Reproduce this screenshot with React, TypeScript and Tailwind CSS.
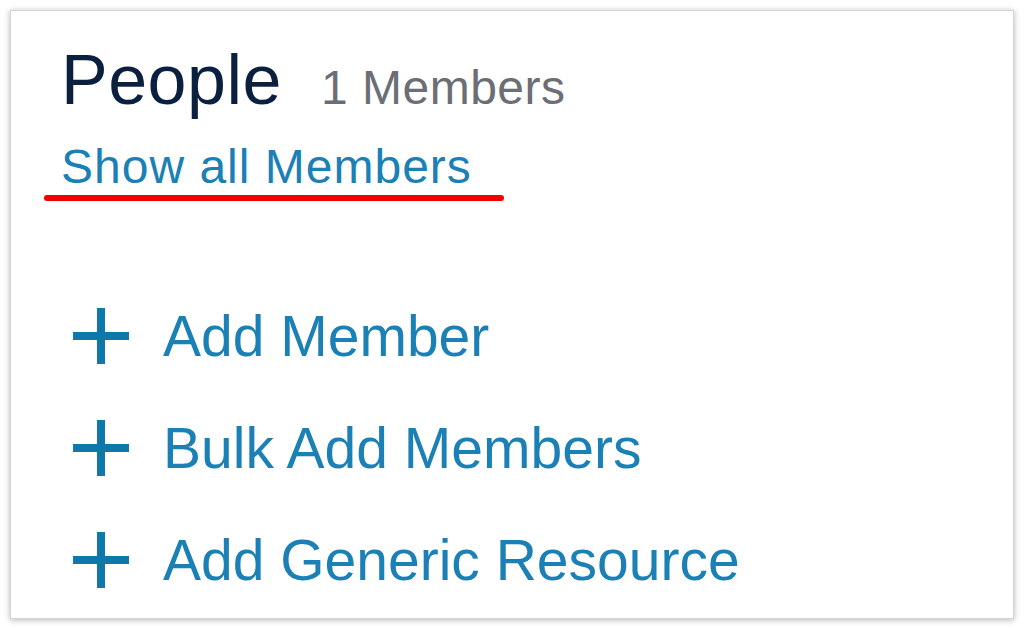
import React from "react";

function Plus() {
  return (
    <svg width="56" height="56" viewBox="0 0 56 56" className="shrink-0">
      <rect x="24" y="0" width="8" height="56" fill="#0e78ab" />
      <rect x="0" y="24" width="56" height="8" fill="#0e78ab" />
    </svg>
  );
}

export default function App() {
  const rows = ["Add Member", "Bulk Add Members", "Add Generic Resource"];
  return (
    <div className="w-[1024px] h-[628px] bg-white overflow-hidden pt-[10px] pl-[10px]" style={{ fontFamily: '"Liberation Sans", Arial, sans-serif' }}>
      <div className="relative w-[1004px] h-[609px] bg-white border border-[#d4d4d4] shadow-[0_1px_6px_rgba(0,0,0,0.3)] pt-[33px] pl-[50px]">
        <div className="flex items-baseline mt-[0.6px]">
          <span className="text-[70px] leading-[70px] tracking-[0.5px] text-[#0b1f3f]">People</span>
          <span className="ml-[39px] text-[48px] leading-[48px] tracking-[0.5px] text-[#6b6e74]">1 Members</span>
        </div>
        <div className="mt-[28px] text-[48px] leading-[48px] tracking-[1px] text-[#1a80b6]">Show all Members</div>
        <div className="absolute left-[33px] top-[184px] w-[460px] h-[6px] rounded-full bg-[#f00000]" />
        <div className="mt-[117px] flex flex-col gap-[55px]">
          {rows.map((r) => (
            <div key={r} className="flex items-center h-[57px] pl-[12px]">
              <Plus />
              <span className="ml-[34px] text-[57px] leading-[57px] text-[#1a80b6]">{r}</span>
            </div>
          ))}
        </div>
      </div>
    </div>
  );
}
